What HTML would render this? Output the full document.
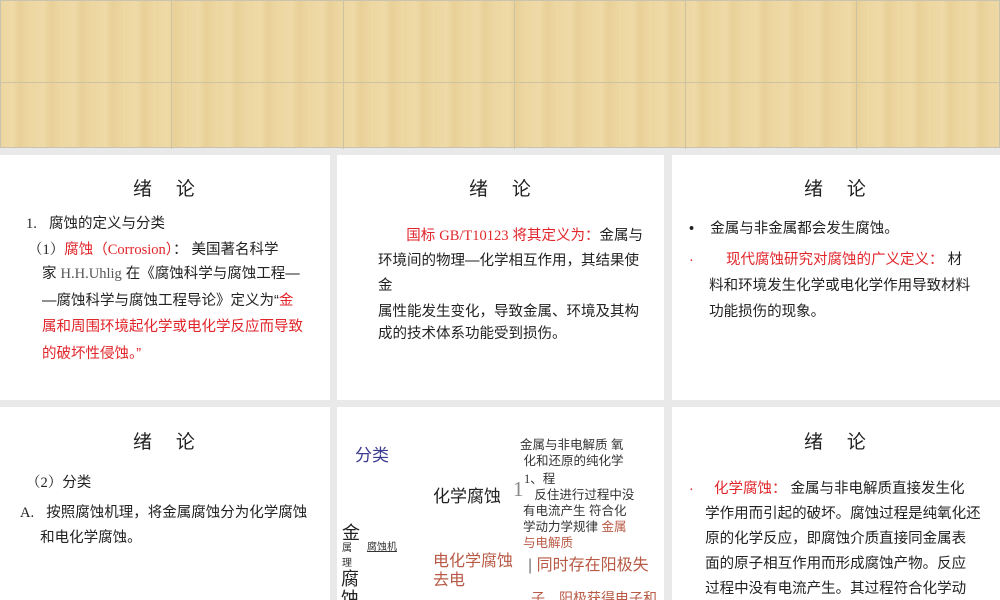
<!DOCTYPE html>
<html><head><meta charset="utf-8"><style>
*{margin:0;padding:0;box-sizing:border-box}
body{width:1000px;height:600px;background:#e9e9e9;position:relative;overflow:hidden;font-family:"Liberation Sans","Noto Sans CJK SC",sans-serif;color:#222}
.ban{position:absolute;left:0;top:0;width:1000px;height:148px;background:repeating-linear-gradient(90deg,#ecd6a0 0,#efdaa8 11px,#e8d097 19px,#eed8a4 31px);border:1px solid #c9c3b0}
.ban i{position:absolute;background:#cdc2a2}
.p{position:absolute;background:#fff;overflow:hidden}
.t{position:absolute;font-size:19px;letter-spacing:2px;color:#222}
.x{position:absolute;font-size:14.5px;line-height:23px;color:#222;white-space:nowrap}
.r{color:#e0262b}
.m{font-family:"Liberation Serif","Noto Serif CJK SC",serif}
</style></head><body>
<div class="ban">
<i style="left:170px;top:0;width:1px;height:148px"></i>
<i style="left:342px;top:0;width:1px;height:148px"></i>
<i style="left:513px;top:0;width:1px;height:148px"></i>
<i style="left:684px;top:0;width:1px;height:148px"></i>
<i style="left:855px;top:0;width:1px;height:148px"></i>
<i style="left:0;top:81px;width:1000px;height:1px"></i>
</div>

<div class="p" style="left:0;top:155px;width:330px;height:245px">
<div class="t" style="left:133px;top:19px">绪&nbsp;&nbsp;&nbsp;论</div>
<div class="x" style="left:26px;top:58px"><span class="m">1.</span>&nbsp;&nbsp;&nbsp;腐蚀的定义与分类</div>
<div class="x" style="left:28px;top:84px"><span class="m">（1）</span><span class="r">腐蚀（<span class="m">Corrosion</span>）</span>： 美国著名科学</div>
<div class="x" style="left:42px;top:106px;line-height:26.5px">家 <span class="m" style="color:#555">H.H.Uhlig</span> 在《腐蚀科学与腐蚀工程—<br>—腐蚀科学与腐蚀工程导论》定义为“<span class="r">金<br>属和周围环境起化学或电化学反应而导致<br>的破坏性侵蚀。”</span></div>
</div>

<div class="p" style="left:337px;top:155px;width:327px;height:245px">
<div class="t" style="left:132px;top:19px">绪&nbsp;&nbsp;&nbsp;论</div>
<div class="x" style="left:41px;top:69px;line-height:25px"><span class="r">&nbsp;&nbsp;&nbsp;&nbsp;&nbsp;&nbsp;&nbsp;国标 <span class="m">GB/T10123</span> 将其定义为：</span>金属与<br>环境间的物理—化学相互作用，其结果使<br>金</div>
<div class="x" style="left:41px;top:146px;line-height:22px">属性能发生变化，导致金属、环境及其构<br>成的技术体系功能受到损伤。</div>
</div>

<div class="p" style="left:672px;top:155px;width:328px;height:245px">
<div class="t" style="left:132px;top:19px">绪&nbsp;&nbsp;&nbsp;论</div>
<div class="x" style="left:17px;top:63px">•&nbsp;&nbsp;&nbsp;&nbsp;金属与非金属都会发生腐蚀。</div>
<div class="x" style="left:17px;top:92px;line-height:26px"><span class="r">·&nbsp;&nbsp;&nbsp;&nbsp;&nbsp;&nbsp;&nbsp;&nbsp;现代腐蚀研究对腐蚀的广义定义：</span> 材<br>&nbsp;&nbsp;&nbsp;&nbsp;&nbsp;料和环境发生化学或电化学作用导致材料<br>&nbsp;&nbsp;&nbsp;&nbsp;&nbsp;功能损伤的现象。</div>
</div>

<div class="p" style="left:0;top:407px;width:330px;height:193px">
<div class="t" style="left:133px;top:20px">绪&nbsp;&nbsp;&nbsp;论</div>
<div class="x" style="left:26px;top:65px"><span class="m">（2）</span>分类</div>
<div class="x" style="left:20px;top:94px;line-height:25px"><span class="m">A.</span>&nbsp;&nbsp;&nbsp;按照腐蚀机理，将金属腐蚀分为化学腐蚀<br>&nbsp;&nbsp;&nbsp;&nbsp;&nbsp;和电化学腐蚀。</div>
</div>

<div class="p" style="left:337px;top:407px;width:327px;height:193px">
<div style="position:absolute;left:18px;top:34px;font-size:17px;color:#3a3a90">分类</div>
<div style="position:absolute;left:183px;top:30px;font-size:12.5px;line-height:16px;color:#333;width:140px">金属与非电解质 氧<br>&nbsp;化和还原的纯化学</div>
<div style="position:absolute;left:96px;top:75px;font-size:17px;color:#222">化学腐蚀</div>
<div class="m" style="position:absolute;left:176px;top:70px;font-size:21px;color:#888">1</div>
<div style="position:absolute;left:187px;top:64px;font-size:12.5px;line-height:16px;color:#333;width:140px"><span class="m">1</span>、程<br>&nbsp;&nbsp;&nbsp;反住进行过程中没</div>
<div style="position:absolute;left:186px;top:96px;font-size:12.5px;line-height:16px;color:#333;width:140px">有电流产生 符合化<br>学动力学规律 <span style="color:#b85a45">金属<br>与电解质</span></div>
<div style="position:absolute;left:5px;top:112px;font-size:18px;color:#222">金</div>
<div style="position:absolute;left:5px;top:134px;font-size:10px;line-height:15px;color:#333">属<br>理</div>
<div style="position:absolute;left:30px;top:131px;font-size:10px;color:#333;text-decoration:underline">腐蚀机</div>
<div style="position:absolute;left:4px;top:162px;font-size:18px;line-height:20px;color:#222">腐<br>蚀</div>
<div style="position:absolute;left:96px;top:145px;font-size:16px;line-height:19px;color:#b85a45">电化学腐蚀<br>去电</div>
<div style="position:absolute;left:191px;top:144px;font-size:16px;color:#b85a45"><span style="color:#777">|</span> 同时存在阳极失</div>
<div style="position:absolute;left:194px;top:181px;font-size:14px;color:#b85a45">子　阳极获得电子和</div>
</div>

<div class="p" style="left:672px;top:407px;width:328px;height:193px">
<div class="t" style="left:132px;top:20px">绪&nbsp;&nbsp;&nbsp;论</div>
<div class="x" style="left:17px;top:70px;line-height:25px"><span class="r">·&nbsp;&nbsp;&nbsp;&nbsp;&nbsp;化学腐蚀：</span> 金属与非电解质直接发生化<br>&nbsp;&nbsp;&nbsp;&nbsp;学作用而引起的破坏。腐蚀过程是纯氧化还<br>&nbsp;&nbsp;&nbsp;&nbsp;原的化学反应，即腐蚀介质直接同金属表<br>&nbsp;&nbsp;&nbsp;&nbsp;面的原子相互作用而形成腐蚀产物。反应<br>&nbsp;&nbsp;&nbsp;&nbsp;过程中没有电流产生。其过程符合化学动</div>
</div>
</body></html>
